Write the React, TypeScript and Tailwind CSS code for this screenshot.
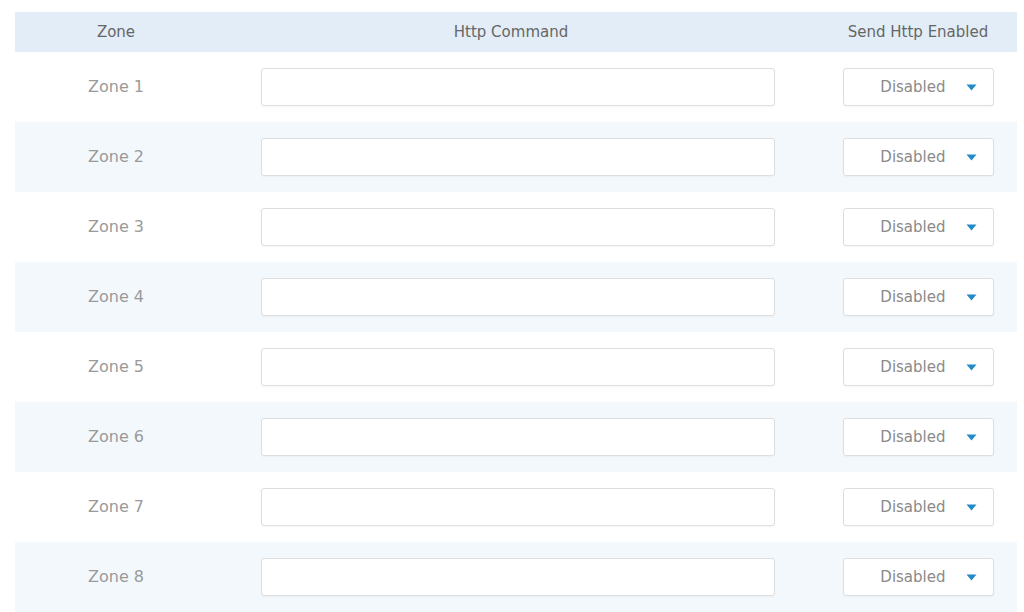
import React from 'react';

const zones = ['Zone 1', 'Zone 2', 'Zone 3', 'Zone 4', 'Zone 5', 'Zone 6', 'Zone 7', 'Zone 8'];

function ArrowDown() {
  return (
    <svg width="11" height="7" viewBox="0 0 11 7" className="shrink-0">
      <path d="M0.5 0.5 L10.5 0.5 L5.5 6.5 Z" fill="#2389c9" />
    </svg>
  );
}

function ZoneRow({ name, index }: { name: string; index: number }) {
  const shaded = index % 2 === 1;
  return (
    <div
      className={`grid h-[70px] grid-cols-[202px_602px_198px] items-center ${
        shaded ? 'bg-[#f3f8fc]' : 'bg-white'
      }`}
    >
      {/* Zone name */}
      <div className="text-center text-[16px] text-[#9a9a9a]">{name}</div>

      {/* Http command input */}
      <div className="flex justify-center">
        <input
          type="text"
          className="h-[38px] w-[514px] rounded-[3px] border border-[#dedede] bg-white px-2 text-[14px] text-[#666] shadow-[0_1px_2px_rgba(0,0,0,0.04)] outline-none"
        />
      </div>

      {/* Enabled select */}
      <div className="flex justify-center">
        <div className="flex h-[38px] w-[151px] items-center justify-end gap-[20px] rounded-[3px] border border-[#dedede] bg-white pr-[16px] shadow-[0_1px_2px_rgba(0,0,0,0.04)]">
          <span className="text-[15px] text-[#8a8a8a]">Disabled</span>
          <ArrowDown />
        </div>
      </div>
    </div>
  );
}

export default function App() {
  return (
    <div className="h-[612px] w-[1024px] overflow-hidden bg-white pt-[12px] pl-[15px] font-['DejaVu_Sans',sans-serif]">
      <div className="w-[1002px]">
        {/* Header */}
        <div className="grid h-[40px] grid-cols-[202px_602px_198px] items-center bg-[#e3edf7] text-[15px] text-[#666]">
          <div className="text-center">Zone</div>
          <div className="pr-[14px] text-center">Http Command</div>
          <div className="text-center">Send Http Enabled</div>
        </div>

        {zones.map((z, i) => (
          <ZoneRow key={z} name={z} index={i} />
        ))}
      </div>
    </div>
  );
}
